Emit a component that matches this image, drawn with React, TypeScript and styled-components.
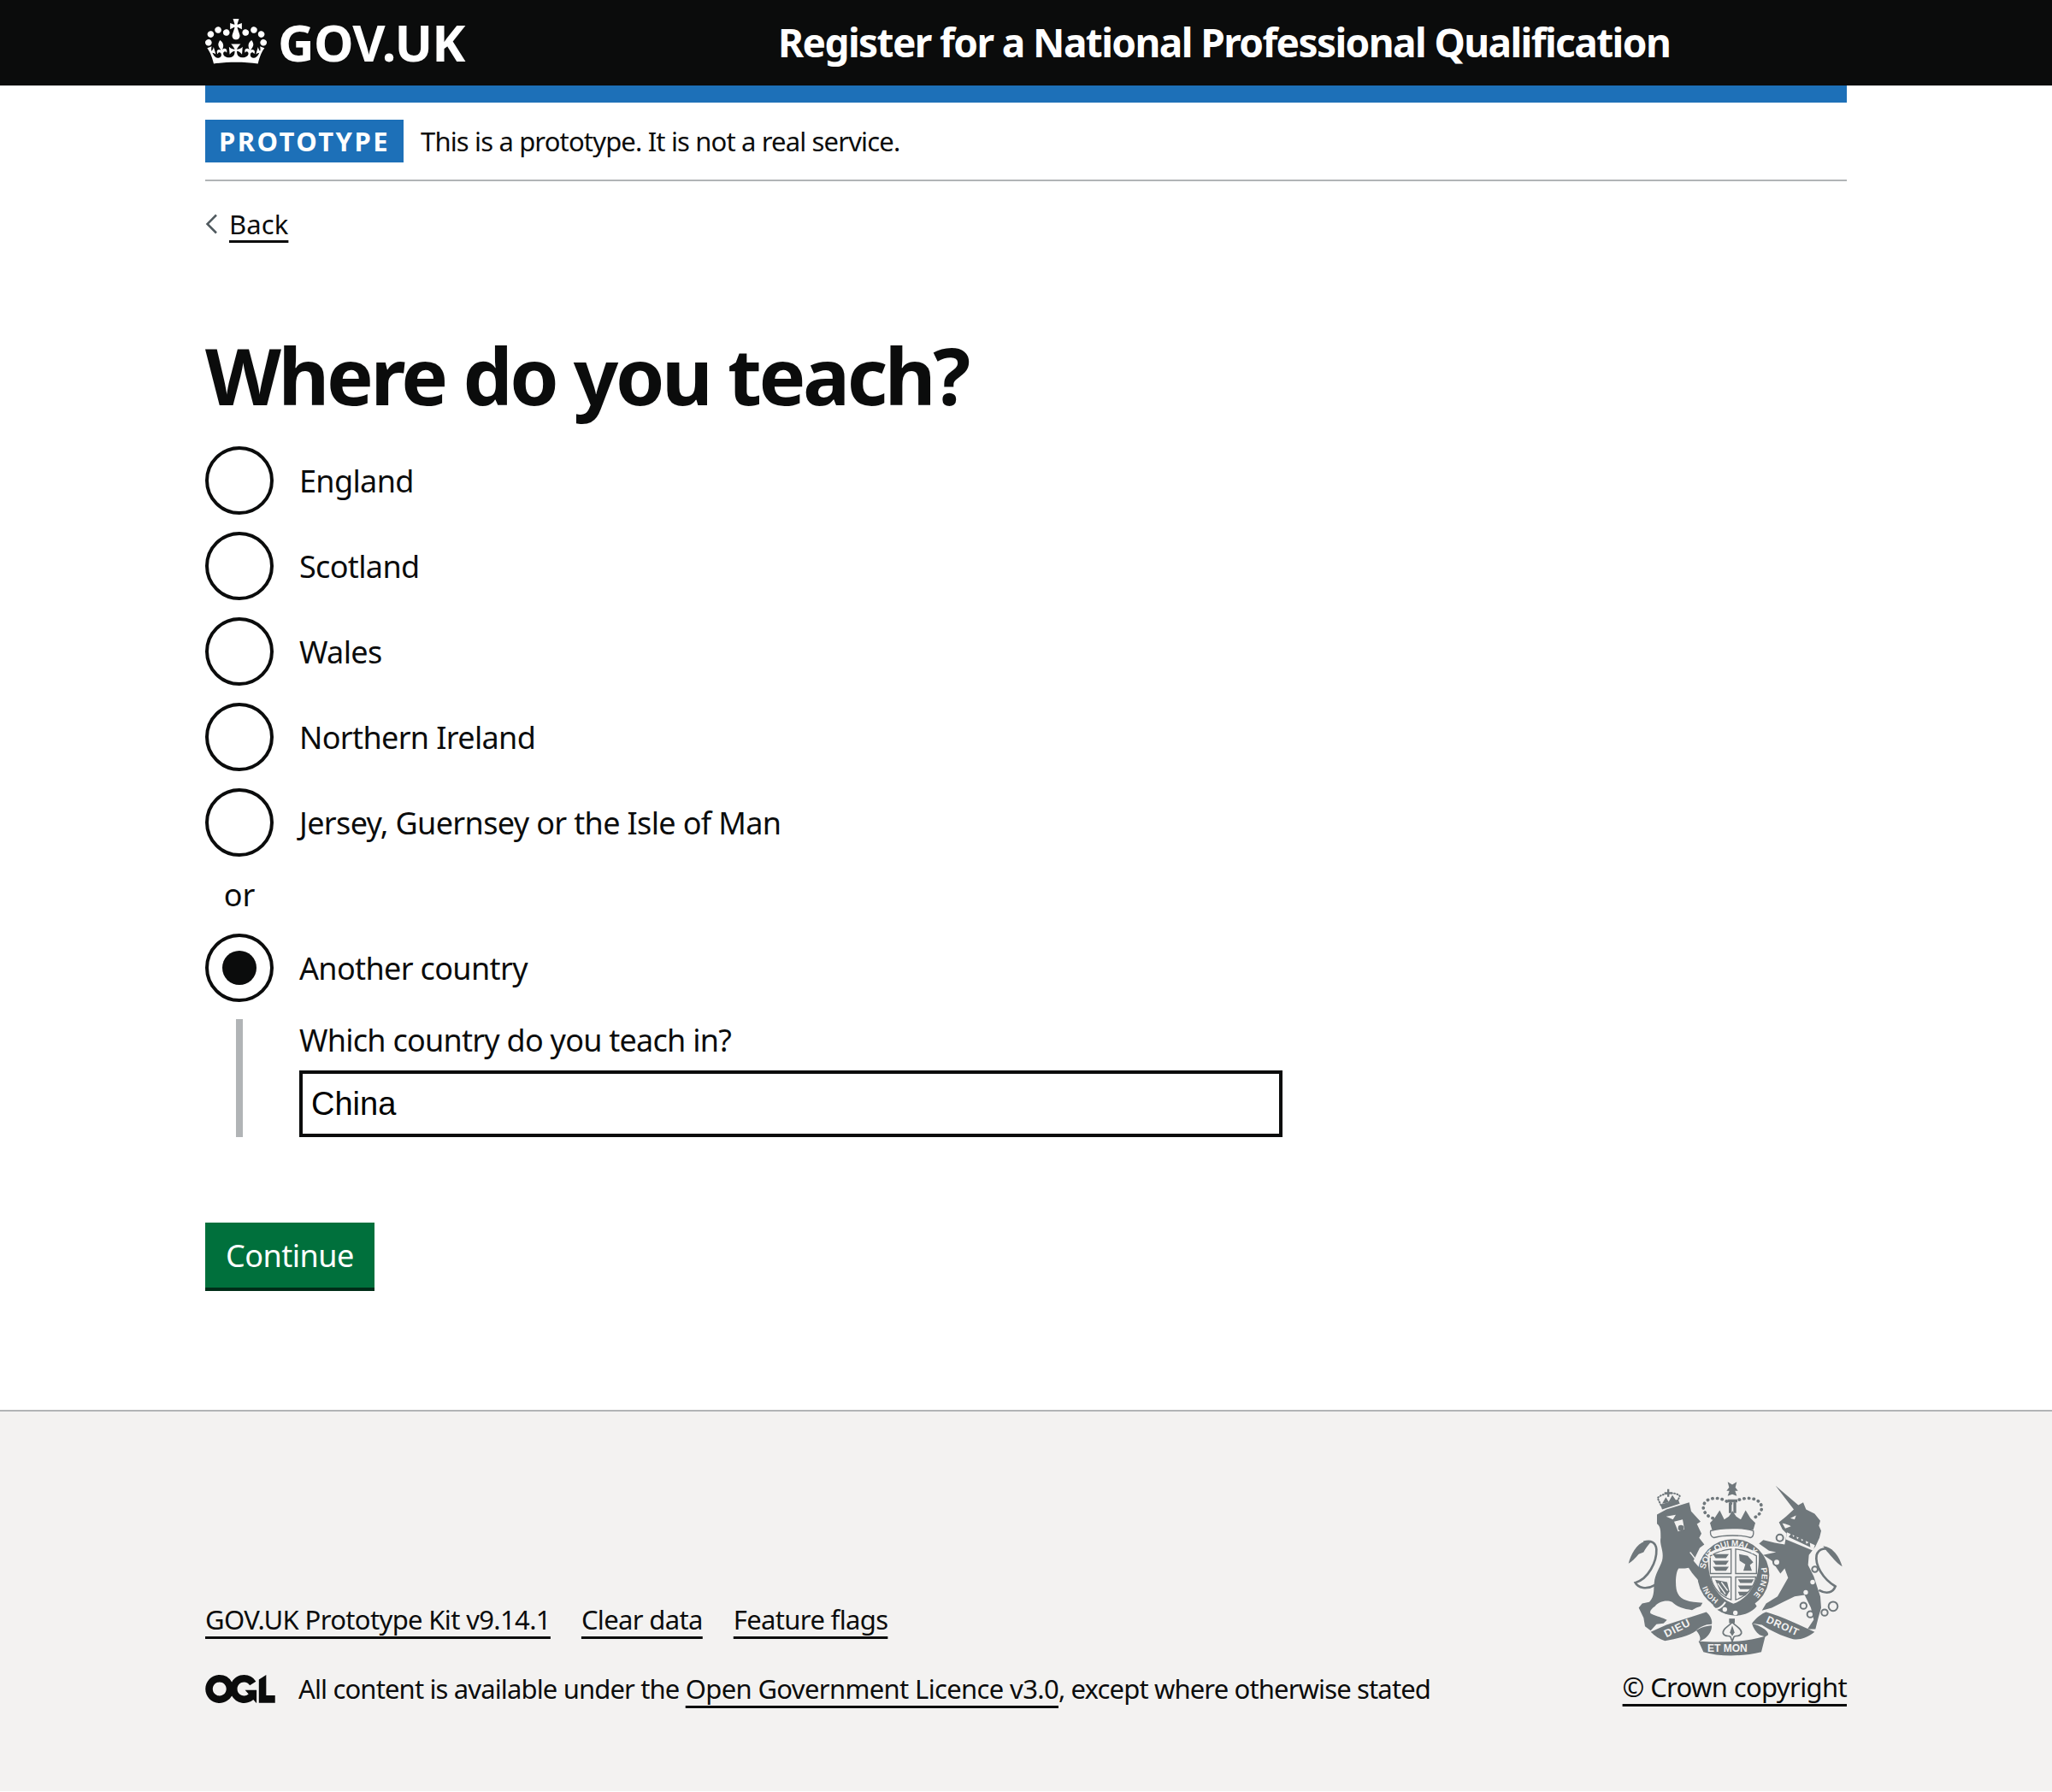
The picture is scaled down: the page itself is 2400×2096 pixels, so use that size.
import styled, { createGlobalStyle } from 'styled-components';

const Global = createGlobalStyle`
    html, body {
        margin: 0;
        padding: 0;
        background: #fff;
        color: #0b0c0c;
        font-family: "Noto Sans", Arial, sans-serif;
    }
`;

const Container = styled.div`
    width: 1920px;
    margin: 0 auto;
`;

const Header = styled.header`
    background: #0b0c0c;
    height: 100px;
    color: #fff;
`;

const HeaderInner = styled(Container)`
    display: flex;
    align-items: center;
    height: 100%;
`;

const Logo = styled.a`
    display: flex;
    align-items: center;
    gap: 13px;
    width: 670px;
    margin-top: -3px;
    color: #fff;
    font-size: 59px;
    font-weight: 700;
    letter-spacing: -0.8px;
`;

const ServiceName = styled.span`
    margin-top: -3px;
    font-size: 46px;
    font-weight: 700;
    letter-spacing: -1.6px;
`;

const BlueBar = styled.div`
    height: 20px;
    background: #1d70b8;
`;

const PhaseBanner = styled.div`
    display: flex;
    align-items: center;
    gap: 20px;
    padding: 20px 0;
    border-bottom: 2px solid #b1b4b6;
`;

const Tag = styled.strong`
    display: block;
    height: 50px;
    line-height: 50px;
    padding: 0 16px;
    background: #1d70b8;
    color: #fff;
    font-size: 31px;
    font-weight: 700;
    letter-spacing: 2.45px;
`;

const PhaseText = styled.span`
    font-size: 31px;
    letter-spacing: -0.85px;
`;

const BackRow = styled.a`
    display: flex;
    align-items: center;
    gap: 14px;
    height: 44px;
    margin-top: 28px;
    font-size: 31px;
    letter-spacing: 0.1px;
`;

const BackLabel = styled.span`
    text-decoration: underline;
    text-decoration-thickness: 3px;
    text-underline-offset: 7px;
`;

const Title = styled.h1`
    margin: 95px 0 23px;
    font-size: 92px;
    line-height: 120px;
    font-weight: 700;
    letter-spacing: -3.4px;
`;

const Options = styled.div`
    display: flex;
    flex-direction: column;
    gap: 20px;
`;

const Option = styled.label`
    display: flex;
    align-items: center;
    gap: 30px;
    height: 80px;
    font-size: 36px;
    letter-spacing: -0.65px;
`;

const Radio = styled.span<{ $checked?: boolean }>`
    position: relative;
    flex: none;
    box-sizing: border-box;
    width: 80px;
    height: 80px;
    border: 4px solid #0b0c0c;
    border-radius: 50%;
    background: #fff;

    &::after {
        content: "";
        display: ${p => (p.$checked ? 'block' : 'none')};
        position: absolute;
        left: 16px;
        top: 16px;
        width: 40px;
        height: 40px;
        border-radius: 50%;
        background: #0b0c0c;
    }
`;

const Divider = styled.div`
    width: 80px;
    height: 60px;
    margin-top: -10px;
    line-height: 70px;
    text-align: center;
    font-size: 36px;
`;

const Conditional = styled.div`
    margin: 0 0 0 36px;
    padding-left: 66px;
    border-left: 8px solid #b1b4b6;
`;

const FieldLabel = styled.label`
    display: block;
    height: 60px;
    line-height: 50px;
    font-size: 36px;
    letter-spacing: -0.75px;
`;

const TextInput = styled.input`
    display: block;
    box-sizing: border-box;
    width: 1150px;
    height: 78px;
    padding: 0 10px;
    border: 4px solid #0b0c0c;
    border-radius: 0;
    outline: none;
    color: #000;
    font-family: "Liberation Sans", Arial, sans-serif;
    font-size: 38px;
`;

const Button = styled.button`
    display: block;
    box-sizing: border-box;
    height: 76px;
    margin-top: 100px;
    padding: 0 24px;
    border: none;
    box-shadow: 0 4px 0 #002d18;
    background: #00703c;
    color: #fff;
    font-family: inherit;
    font-size: 36px;
    letter-spacing: -0.5px;
`;

const Footer = styled.footer`
    box-sizing: border-box;
    height: 446px;
    margin-top: 143px;
    border-top: 2px solid #b1b4b6;
    background: #f3f2f1;
`;

const FooterInner = styled(Container)`
    display: flex;
    justify-content: space-between;
    align-items: flex-end;
    padding-top: 80px;
`;

const Meta = styled.div`
    display: flex;
    flex-direction: column;
    gap: 39px;
`;

const MetaLinks = styled.div`
    display: flex;
    gap: 36px;
`;

const FooterLink = styled.a`
    font-size: 31px;
    letter-spacing: -0.65px;
    text-decoration: underline;
    text-decoration-thickness: 3px;
    text-underline-offset: 8px;
`;

const Licence = styled.div`
    display: flex;
    align-items: center;
    gap: 27px;
    margin-bottom: -2px;
    font-size: 31px;
    letter-spacing: -0.86px;
`;

const Copyright = styled.div`
    display: flex;
    flex-direction: column;
    align-items: flex-end;
    gap: 14px;
`;

const CrestArt = styled.svg`
    display: block;
    margin-right: 4px;
`;

function Crown() {
    return <svg viewBox="0 0 132 97" width="72" height="53">
        <path fill="currentColor" fillRule="evenodd" d="M25 30.2c3.5 1.5 7.7-.2 9.1-3.7 1.5-3.6-.2-7.8-3.9-9.2-3.6-1.4-7.6.3-9.1 3.9-1.4 3.5.3 7.5 3.9 9zM9 39.5c3.6 1.5 7.8-.2 9.2-3.7 1.5-3.6-.2-7.8-3.9-9.1-3.6-1.5-7.6.2-9.1 3.8-1.4 3.5.3 7.5 3.8 9zM4.4 57.2c3.5 1.5 7.7-.2 9.1-3.8 1.5-3.6-.2-7.7-3.9-9.1-3.5-1.5-7.6.3-9.1 3.8-1.4 3.5.3 7.6 3.9 9.1zm38.3-21.4c3.5 1.5 7.7-.2 9.1-3.8 1.5-3.6-.2-7.7-3.9-9.1-3.6-1.5-7.6.3-9.1 3.8-1.3 3.6.4 7.7 3.9 9.1zm64.4-5.6c-3.6 1.5-7.8-.2-9.1-3.7-1.5-3.6.2-7.8 3.8-9.2 3.6-1.4 7.7.3 9.2 3.9 1.3 3.5-.4 7.5-3.9 9zm15.9 9.3c-3.6 1.5-7.7-.2-9.1-3.7-1.5-3.6.2-7.8 3.7-9.1 3.6-1.5 7.7.2 9.2 3.8 1.5 3.5-.3 7.5-3.8 9zm4.7 17.7c-3.6 1.5-7.8-.2-9.2-3.8-1.5-3.6.2-7.7 3.9-9.1 3.6-1.5 7.7.3 9.2 3.8 1.3 3.5-.4 7.6-3.9 9.1zM89.3 35.8c-3.6 1.5-7.8-.2-9.2-3.8-1.4-3.6.2-7.7 3.9-9.1 3.6-1.5 7.7.3 9.2 3.8 1.4 3.6-.3 7.7-3.9 9.1zM69.7 17.7l8.9 4.7V9.3l-8.9 2.8c-.2-.3-.5-.6-.9-.9L72.4 0H59.6l3.6 11.2c-.3.3-.6.5-.9.9l-8.8-2.8v13.1l8.8-4.7c.3.3.6.7.9.9l-5 15.4v.1c-.2.8-.4 1.6-.4 2.4 0 4.1 3.1 7.5 7 8.1h.2c.3 0 .7.1 1 .1.4 0 .7 0 1-.1h.2c4-.6 7.1-4.1 7.1-8.1 0-.8-.1-1.7-.4-2.4V34l-5.1-15.4c.4-.2.7-.6 1-.9zM66 92.8c16.9 0 32.8 1.1 47.1 3.2 4-16.9 8.9-26.7 14-33.5l-9.6-3.4c1 4.9 1.1 7.2 0 10.2-1.5-1.4-3-4.3-4.2-8.7L108.6 76c2.8-2 5-3.2 7.5-3.3-4.4 9.4-10 11.9-13.6 11.2-4.3-.8-6.3-4.6-5.6-7.9 1-4.7 5.7-5.9 8-.5 4.3-8.7-3-11.4-7.6-8.8 7.1-7.2 7.9-13.5 2.1-21.1-8 6.1-8.1 12.3-4.5 20.8-4.7-5.4-12.1-2.5-9.5 6.2 3.4-5.2 7.9-2 7.2 3.1-.6 4.3-6.4 7.8-13.5 7.2-10.3-.9-10.9-8-11.2-13.8 2.5-.5 7.1 1.8 11 7.3L80.2 60c-4.1 4.4-8 5.3-12.3 5.4 1.4-4.4 8-11.6 8-11.6H55.5s6.4 7.2 7.9 11.6c-4.2-.1-8-1-12.3-5.4l1.4 16.4c3.9-5.5 8.5-7.7 10.9-7.3-.3 5.8-.9 12.8-11.1 13.8-7.2.6-12.9-2.9-13.5-7.2-.7-5 3.8-8.3 7.1-3.1 2.7-8.7-4.6-11.6-9.4-6.2 3.7-8.5 3.6-14.7-4.6-20.8-5.8 7.6-5 13.9 2.2 21.1-4.7-2.6-11.9.1-7.7 8.8 2.3-5.5 7.1-4.2 8.1.5.7 3.3-1.3 7.1-5.7 7.9-3.5.7-9-1.8-13.5-11.2 2.5.1 4.7 1.3 7.5 3.3l-4.7-15.4c-1.2 4.4-2.7 7.2-4.3 8.7-1.1-3-.9-5.3 0-10.2l-9.5 3.4c5 6.9 9.9 16.7 14 33.5 14.8-2.1 30.8-3.2 47.7-3.2z" />
    </svg>;
}

function OglLogo() {
    return <svg viewBox="0 0 483.2 195.7" width="82" height="33">
        <path fill="#0b0c0c" d="M421.5 142.8V.1l-50.7 32.3v161.1h112.4v-50.7zm-122.3-9.6A47.12 47.12 0 0 1 221 97.8c0-26 21.1-47.1 47.1-47.1 16.7 0 31.4 8.7 39.7 21.8l42.7-27.2A97.63 97.63 0 0 0 268.1 0c-36.5 0-68.3 20.1-85.1 49.7A98 98 0 0 0 97.8 0C43.9 0 0 43.9 0 97.8s43.9 97.8 97.8 97.8c36.5 0 68.3-20.1 85.1-49.7a97.76 97.76 0 0 0 149.6 25.4l19.4 22.2h3v-87.8h-80l24.3 27.5zM97.8 145c-26 0-47.1-21.1-47.1-47.1s21.1-47.1 47.1-47.1 47.2 21 47.2 47S123.8 145 97.8 145" />
    </svg>;
}

// royal arms, drawn by hand from the reference
function Crest() {
    const ink = '#6f777b';
    const bg = '#f3f2f1';
    return <CrestArt viewBox="70 62 756 620" width="252" height="207">
        {/* lion */}
        <path fill={ink} d="M172 183 L205 165 L285 140 L292 172 L325 208 L312 216 L328 250 L320 265 L338 288 L322 300 L300 345 L325 375 L345 420 L338 432 L318 415 L305 400 L295 388 L283 370 L270 372 L248 372 C238 385 236 420 240 445 C245 470 260 485 300 490 L332 493 L325 505 L310 510 L295 518 C265 515 240 505 225 490 C205 480 175 490 165 505 C150 515 145 525 150 530 C170 540 195 545 207 553 L195 565 L170 568 L150 590 L130 575 L125 545 L108 510 L120 495 L145 490 C165 470 160 440 162 425 C165 390 180 375 190 345 C198 310 180 290 185 265 C185 240 185 225 172 215 Z" />
        <path fill="none" stroke={ink} strokeWidth="8" d="M165 430 C135 448 105 440 96 422 C140 410 172 350 170 305 C168 280 150 272 125 280" />
        <path fill={ink} d="M72 355 C80 325 100 285 130 277 L150 280 C140 292 130 305 125 315 L108 322 C95 338 85 347 72 355 Z" />
        <path fill={bg} d="M204 190 L238 184 L228 200 Z M232 208 L262 200 L268 235 L246 242 L238 222 Z" />
        <circle cx="256" cy="230" r="10" fill={ink} />
        <path stroke={bg} strokeWidth="4" d="M288 315 L335 375" />
        {/* lion crown */}
        <path fill="none" stroke={ink} strokeWidth="6" strokeDasharray="3 7" strokeLinecap="round" d="M186 150 L174 125 C190 108 235 100 252 118 L240 145" />
        <path fill={ink} d="M184 148 L246 130 L252 145 L190 165 Z M198 104 h10 v-10 h7 v10 h10 v7 h-10 v10 h-7 v-10 h-10 Z" />
        <path fill={ink} d="M190 145 L203 122 L213 138 L226 115 L240 135 Z" />
        {/* unicorn */}
        <path fill={ink} d="M588 82 L668 150 L685 140 L695 165 L725 180 L745 205 L740 222 L748 240 L742 265 L728 295 L705 325 L702 360 L722 400 L745 470 L748 510 L738 545 L728 585 L700 585 L722 552 L712 510 L690 465 L655 470 L615 490 L575 510 L540 520 L555 495 L595 470 L612 440 L632 405 L620 372 L605 390 L575 345 L545 325 L590 315 L565 310 L530 285 L545 272 L585 282 L620 288 L627 250 L612 235 L600 210 L625 190 L652 165 Z" />
        <path fill="none" stroke={ink} strokeWidth="8" d="M740 448 C770 465 790 455 798 435 C755 410 725 360 732 325 C740 300 765 298 785 310" />
        <path fill={ink} d="M822 365 C812 330 790 298 755 293 L768 312 C785 330 800 352 822 365 Z" />
        <path fill={bg} d="M628 245 L726 290 L720 310 L624 270 Z" />
        <path fill={ink} d="M634 262 L645 246 L650 262 L660 252 L664 270 L675 258 L680 276 L692 266 L696 286 L708 278 L710 298 L720 302 Z" />
        <path fill={bg} d="M612 214 C625 216 635 220 642 224 L622 232 Z M640 196 L660 186 L655 200 Z" />
        <g fill={bg} stroke={ink} strokeWidth="6">
            <circle cx="603" cy="265" r="12" /><circle cx="592" cy="350" r="12" /><circle cx="726" cy="375" r="10" />
            <circle cx="686" cy="503" r="11" /><circle cx="710" cy="533" r="11" /><circle cx="760" cy="527" r="11" /><circle cx="790" cy="505" r="16" />
        </g>
        <g fill={bg}><circle cx="718" cy="420" r="8" /><circle cx="694" cy="456" r="8" /></g>
        {/* helm crown */}
        <path fill={ink} d="M420 68 L436 78 L452 68 L447 88 L456 100 L446 100 L452 118 L436 112 L420 118 L426 100 L416 100 L425 88 Z" />
        <path fill={ink} d="M424 142 h10 v36 h-10 Z M440 142 h10 v36 h-10 Z M420 130 h34 v10 h-34 Z" />
        <path fill={ink} d="M358 212 L374 196 L392 168 L408 200 L424 190 L437 170 L450 190 L466 200 L483 168 L500 196 L517 212 L510 236 L365 236 Z" />
        <path fill={bg} stroke={ink} strokeWidth="4" d="M360 240 C400 228 475 228 510 240 C512 254 508 262 500 264 C470 254 405 254 372 264 C364 262 358 254 360 240 Z" />
        <path fill="none" stroke={ink} strokeWidth="11" strokeDasharray="1 16" strokeLinecap="round" d="M368 196 C335 185 322 150 350 132 C380 118 410 130 430 145 C455 130 490 118 522 132 C552 150 540 185 508 196" />
        {/* garter and shield */}
        <circle cx="440" cy="395" r="126" fill={ink} />
        <path fill={ink} d="M360 490 C390 545 480 555 522 505 L500 470 H380 Z" />
        <path fill={bg} d="M351 320 C380 300 410 296 440 294 C470 296 500 300 529 320 C532 400 510 470 440 496 C370 470 348 400 351 320 Z" />
        <path fill="none" stroke={ink} strokeWidth="4" d="M359 390 V328 C385 312 410 306 432 304 V390 Z M448 304 C470 306 495 312 521 328 V390 H448 Z M361 402 H432 V482 C395 470 368 440 361 402 Z M448 402 H519 C512 440 485 470 448 482 Z" />
        <path fill={ink} d="M368 322 h56 l-10 14 h-36 Z M368 345 h56 l-10 14 h-36 Z M368 366 h56 l-10 14 h-36 Z M456 410 h56 l-8 13 h-40 Z M456 432 h52 l-10 13 h-34 Z M456 454 h38 l-12 13 h-20 Z" />
        <path fill={ink} d="M460 322 L490 328 L510 350 L498 360 L505 380 L475 380 L482 358 L462 345 Z" />
        <path fill={ink} d="M376 412 L418 420 L426 452 L415 472 L395 455 Z" />
        <path stroke={bg} strokeWidth="4" d="M385 424 L412 462 M398 420 L420 450" />
        <path id="garterTop" fill="none" d="M341 375 A100 100 0 0 1 524 341" />
        <path id="garterRight" fill="none" d="M535 365 A100 100 0 0 1 478 487" />
        <path id="garterLeft" fill="none" d="M388 482 A100 100 0 0 1 341 410" />
        <g fill={bg} fontFamily="'Liberation Sans', sans-serif" fontWeight="700" fontSize="30">
            <text letterSpacing="-1"><textPath href="#garterTop">SOIT QUI MAL Y</textPath></text>
            <text fontSize="28" letterSpacing="2"><textPath href="#garterRight" startOffset="6">PENSE</textPath></text>
            <text fontSize="26"><textPath href="#garterLeft">HONI</textPath></text>
        </g>
        <path fill="none" stroke={bg} strokeWidth="6" d="M365 498 C368 525 395 515 412 490" />
        <circle cx="410" cy="516" r="8" fill={bg} /><circle cx="447" cy="528" r="8" fill={bg} />
        {/* motto */}
        <path fill={ink} d="M150 595 L205 570 C250 555 300 540 345 525 C358 535 368 555 364 568 C342 568 322 578 310 590 C285 610 240 618 200 626 C182 622 165 610 150 595 Z" />
        <path fill={ink} d="M310 590 C328 612 325 622 318 630 L340 618 C355 605 365 590 364 572 C342 574 322 580 310 590 Z" />
        <path fill={ink} d="M318 628 C390 632 480 632 552 610 L538 665 C470 682 390 682 335 665 Z" />
        <path fill={ink} d="M505 565 C520 545 540 530 555 525 C610 540 680 575 725 595 C700 615 670 625 650 620 C610 610 570 590 540 570 Z" />
        <path fill={ink} d="M505 565 C530 572 565 590 562 605 L552 612 L532 605 C518 595 510 582 505 565 Z" />
        <path fill={ink} d="M425 548 h20 v16 h-20 Z" />
        <path fill={bg} stroke={ink} strokeWidth="5" d="M436 560 C450 578 470 582 468 600 C460 615 448 605 442 612 L436 628 L430 612 C424 605 412 615 404 600 C402 582 422 578 436 560 Z" />
        <path fill={ink} d="M436 572 L444 596 L436 610 L428 596 Z" />
        <g fill={bg} fontFamily="'Liberation Sans', sans-serif" fontWeight="700">
            <text x="205" y="615" fontSize="38" transform="rotate(-27 205 615)" letterSpacing="2">DIEU</text>
            <text x="349" y="664" fontSize="36">ET MON</text>
            <text x="553" y="560" fontSize="36" transform="rotate(24 553 560)" letterSpacing="2">DROIT</text>
        </g>
    </CrestArt>;
}

export default function App() {
    return <>
        <Global />
        <Header>
            <HeaderInner>
                <Logo><Crown />GOV.UK</Logo>
                <ServiceName>Register for a National Professional Qualification</ServiceName>
            </HeaderInner>
        </Header>
        <Container>
            <BlueBar />
            <PhaseBanner>
                <Tag>PROTOTYPE</Tag>
                <PhaseText>This is a prototype. It is not a real service.</PhaseText>
            </PhaseBanner>
            <BackRow>
                <svg width="14" height="24" viewBox="0 0 14 24">
                    <path d="M13 1.5 L2.5 12 L13 22.5" fill="none" stroke="#505a5f" strokeWidth="2.5" />
                </svg>
                <BackLabel>Back</BackLabel>
            </BackRow>
            <Title>Where do you teach?</Title>
            <Options>
                <Option><Radio />England</Option>
                <Option><Radio />Scotland</Option>
                <Option><Radio />Wales</Option>
                <Option><Radio />Northern Ireland</Option>
                <Option><Radio />Jersey, Guernsey or the Isle of Man</Option>
                <Divider>or</Divider>
                <Option><Radio $checked />Another country</Option>
                <Conditional>
                    <FieldLabel>Which country do you teach in?</FieldLabel>
                    <TextInput defaultValue="China" />
                </Conditional>
            </Options>
            <Button>Continue</Button>
        </Container>
        <Footer>
            <FooterInner>
                <Meta>
                    <MetaLinks>
                        <FooterLink>GOV.UK Prototype Kit v9.14.1</FooterLink>
                        <FooterLink>Clear data</FooterLink>
                        <FooterLink>Feature flags</FooterLink>
                    </MetaLinks>
                    <Licence>
                        <OglLogo />
                        <span>All content is available under the <FooterLink>Open Government Licence v3.0</FooterLink>, except where otherwise stated</span>
                    </Licence>
                </Meta>
                <Copyright>
                    <Crest />
                    <FooterLink>© Crown copyright</FooterLink>
                </Copyright>
            </FooterInner>
        </Footer>
    </>;
}
